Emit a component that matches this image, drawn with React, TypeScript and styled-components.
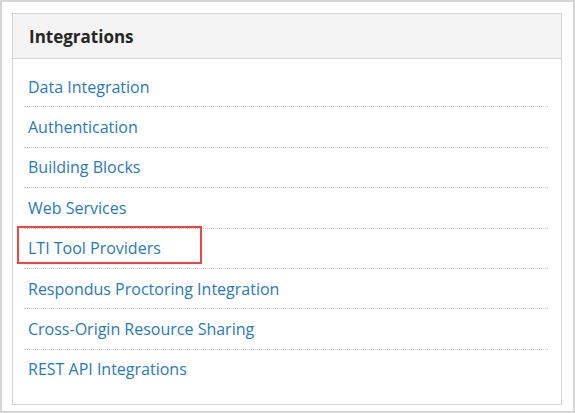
import * as React from 'react'
import styled, { createGlobalStyle } from 'styled-components';

const Global = createGlobalStyle`
    body { margin: 0; background: #fff; font-family: "Open Sans", "Liberation Sans", sans-serif; }
`;

const items = [
    'Data Integration',
    'Authentication',
    'Building Blocks',
    'Web Services',
    'LTI Tool Providers',
    'Respondus Proctoring Integration',
    'Cross-Origin Resource Sharing',
    'REST API Integrations',
];

export default function App() : React.ReactElement{
    return (<>
        <Global/>
        <Frame>
            <Panel>
                <Header>Integrations</Header>
                <List>
                    {items.map((item, i) => (
                        <Row key={item} last={i === items.length - 1}>
                            <Link highlighted={item === 'LTI Tool Providers'}>{item}</Link>
                        </Row>
                    ))}
                </List>
            </Panel>
        </Frame>
    </>);
}

const Frame = styled.div`
    box-sizing: border-box;
    width: 575px;
    height: 413px;
    border: 2px solid #d6d6d6;
    padding: 11px 11px 6px 10px;
`;

const Panel = styled.div`
    box-sizing: border-box;
    height: 100%;
    border: 1px solid #d4d4d4;
`;

const Header = styled.div`
    height: 44px;
    background: #f4f4f4;
    border-bottom: 1px solid #d4d4d4;
    padding-left: 16px;
    display: flex;
    align-items: center;
    font-size: 17px;
    font-weight: 700;
    color: #262626;
`;

const List = styled.div`
    padding: 8px 13px 0 11px;
`;

const Row = styled.div<{ last: boolean }>`
    height: 39.4px;
    display: flex;
    align-items: center;
    border-bottom: ${p => p.last ? 'none' : '1px dotted #c8c8c8'};
    position: relative;
`;

const Link = styled.span<{ highlighted: boolean }>`
    font-size: 16px;
    color: #2a7ab8;
    padding-left: 4px;
    position: relative;
    &::after {
        content: '';
        display: ${p => p.highlighted ? 'block' : 'none'};
        position: absolute;
        box-sizing: border-box;
        left: -7px;
        top: -11px;
        width: 185px;
        height: 38px;
        border: 2px solid #f04545;
    }
`;
